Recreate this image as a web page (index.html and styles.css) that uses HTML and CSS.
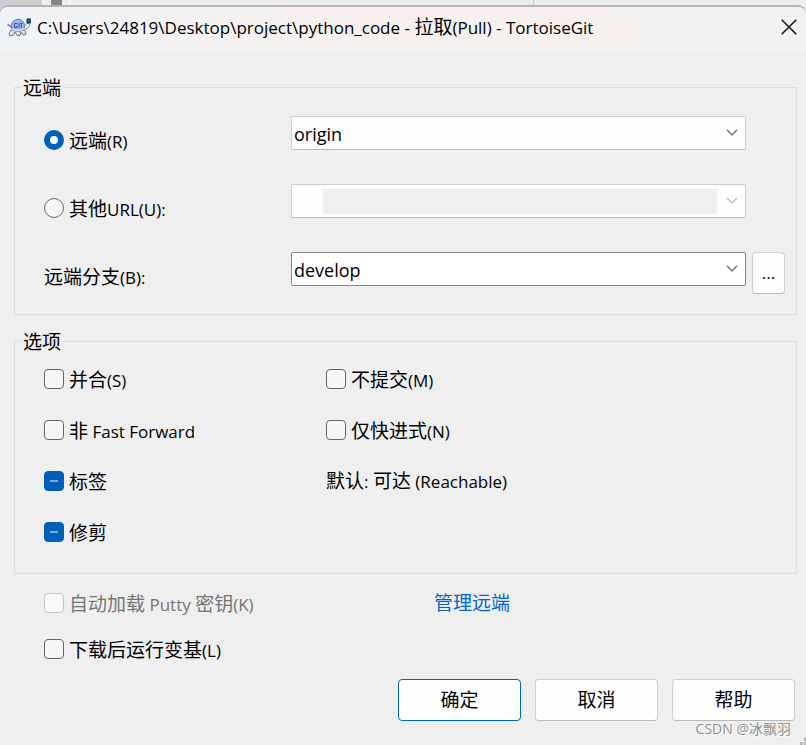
FILE: index.html
```html
<!DOCTYPE html>
<html lang="zh-CN">
<head>
<meta charset="utf-8">
<title>拉取(Pull) - TortoiseGit</title>
<link rel="stylesheet" href="styles.css">
</head>
<body>
<div class="backdrop"><span class="back-left"></span><span class="back-mark"></span><span class="back-mid"></span><span class="back-right"></span></div>
<main class="window">
  <header class="titlebar">
    <svg class="logo" viewBox="0 0 24 19" aria-hidden="true">
      <path d="M0.500 6.500 L4 8.500 L5 11" fill="none" stroke="#7d8797" stroke-width="1.800"/>
      <path d="M4 12 Q1 15 2.500 17.500 L6 17.500 L8 14 L10 17.500 L13 17.500 L14 14 L16 17 L19 16.500 Q19 13 17 12 Z" fill="#dfe2e6" stroke="#777"/>
      <path d="M16 11 Q18 5 21 5 L23 7 L20 11 Z" fill="#f0f2f4" stroke="#85898f" stroke-width=".9"/>
      <ellipse cx="11" cy="7.500" rx="6.500" ry="6.200" fill="#9db6f0" stroke="#6479b0"/>
      <path d="M5 10.500 Q11 15 17 10.500" fill="none" stroke="#dce5fa" stroke-width="1.500"/>
      <path d="M10 5.500 H7.500 V9.500 H10 V7.500 M12 5 V10 M13 5.500 H15.500 M14.300 5.500 V10" fill="none" stroke="#3d5391"/>
      <rect x="19.500" y="0.500" width="4.500" height="5" rx="1" fill="#15334c"/>
      <rect x="21" y="2" width="2" height="2" fill="#2b7c96"/>
    </svg>
    <h1 class="title"><span class="en">C:\Users\24819\Desktop\project\python_code - </span>拉取<span class="en">(Pull) - TortoiseGit</span></h1>
    <button class="close" type="button" aria-label="关闭"><svg viewBox="0 0 16 16"><path d="M.7 .7 L15.300 15.300 M15.300 .7 L.7 15.300"/></svg></button>
  </header>

  <form class="dialog">
    <fieldset class="group">
      <legend>远端</legend>
      <div class="remote-grid">
        <label class="option field-label"><input type="radio" name="source" checked><span>远端<span class="en">(R)</span></span></label>
        <div class="combo"><select aria-label="远端"><option>origin</option></select><svg class="chevron" viewBox="0 0 12 7"><path d="M1 1 L6 6 L11 1"/></svg></div>
        <label class="option field-label"><input type="radio" name="source"><span>其他<span class="en">URL(U):</span></span></label>
        <div class="combo"><select aria-label="其他URL" disabled><option></option></select><span class="mask"></span><svg class="chevron" viewBox="0 0 12 7"><path d="M1 1 L6 6 L11 1"/></svg></div>
        <label class="option field-label" for="branch"><span>远端分支<span class="en">(B):</span></span></label>
        <div class="combo strong"><select id="branch"><option>develop</option></select><svg class="chevron" viewBox="0 0 12 7"><path d="M1 1 L6 6 L11 1"/></svg></div>
        <button class="button browse" type="button">...</button>
      </div>
    </fieldset>

    <fieldset class="group">
      <legend>选项</legend>
      <div class="option-grid">
        <label class="option"><input type="checkbox"><span>并合<span class="en">(S)</span></span></label>
        <label class="option"><input type="checkbox"><span>不提交<span class="en">(M)</span></span></label>
        <label class="option"><input type="checkbox"><span>非<span class="en"> Fast Forward</span></span></label>
        <label class="option"><input type="checkbox"><span>仅快进式<span class="en">(N)</span></span></label>
        <label class="option"><input type="checkbox" data-mixed><span>标签</span></label>
        <span class="note">默认<span class="en">: </span>可达<span class="en"> (Reachable)</span></span>
        <label class="option"><input type="checkbox" data-mixed><span>修剪</span></label>
      </div>
    </fieldset>

    <div class="extras">
      <label class="option disabled"><input type="checkbox" disabled><span>自动加载<span class="en"> Putty </span>密钥<span class="en">(K)</span></span></label>
      <a class="manage" href="#remotes">管理远端</a>
      <label class="option"><input type="checkbox"><span>下载后运行变基<span class="en">(L)</span></span></label>
    </div>

    <div class="actions">
      <button class="button primary" type="submit">确定</button>
      <button class="button" type="button">取消</button>
      <button class="button" type="button">帮助</button>
    </div>
  </form>
  <span class="watermark">CSDN @冰飘羽</span>
  <svg class="grip" viewBox="0 0 6 7" aria-hidden="true"><path d="M4 0h2v3h-2z M0 4h3v3h-3z M4 4h2v3h-2z"/></svg>
</main>
<script src="script.js"></script>
</body>
</html>
```
FILE: styles.css
```css
* { box-sizing: border-box; }

body {
  margin: 0;
  min-height: 100vh;
  display: flex;
  flex-direction: column;
  background: #efefef;
  color: #000;
  font: 19px/26px "Open Sans", "Noto Sans CJK SC", sans-serif;
}

.en { font-size: 17px; line-height: 1; white-space: pre; }

button, select, input { font: inherit; color: inherit; margin: 0; }

.backdrop {
  display: flex;
  height: 16px;
  margin-bottom: -9px;
  background: #ededed;
}
.back-left { width: 43px; background: #cdcdcd; border-right: 1px solid #f8f8f8; }
.back-mark { width: 11px; margin-left: 8px; background: #868686; }
.back-mid { width: 9px; border-right: 2px solid #f8f8f8; }
.back-right { width: 463px; border-right: 1px solid #c8c8c8; margin-right: auto; }

.window {
  position: relative;
  flex: 1;
  display: flex;
  flex-direction: column;
  background: #efefef;
  border-radius: 8px 8px 0 0;
  box-shadow: 0 -2px 0 #b5b5b5;
}

.titlebar {
  display: flex;
  align-items: center;
  height: 43px;
  padding: 0 9px 3px 7px;
  gap: 6px;
  border-radius: 8px 8px 0 0;
  background: linear-gradient(90deg, #eff3f8, #f6f1ef 35%, #f6f1ef 75%, #f2f3f1 85%, #f0f3f1);
}
.logo { width: 24px; height: 19px; flex: none; }
.title { flex: 1; margin: 0; font-size: 19px; font-weight: 400; white-space: nowrap; }
.close { display: flex; padding: 0; border: 0; background: none; }
.close svg { width: 16px; height: 16px; fill: none; stroke: #111; stroke-width: 1.5; }

.dialog { padding: 24px 9px 0 14px; }

.group {
  min-width: 0;
  margin: 0;
  padding: 0 11px 0 29px;
  border: 1px solid #dcdcdc;
}
.group legend { padding: 1px 2px 0; margin-left: -23px; }

.remote-grid {
  display: grid;
  grid-template-columns: 241px 1fr 33px;
  column-gap: 6px;
  row-gap: 31px;
  align-items: start;
  padding: 15px 0 20px;
}
.field-label { grid-column: 1; padding-top: 11px; }
.combo { position: relative; grid-column: 2; }
.combo select {
  display: block;
  width: 100%;
  height: 34px;
  padding: 2px 30px 0 2px;
  appearance: none;
  font-size: 18px;
  border: 1px solid #cdcdcd;
  border-bottom-color: #b8b8b8;
  border-radius: 2px;
  background: #fdfdfd;
  opacity: 1;
}
.combo.strong select { border-color: #868686; background: #fff; }
.chevron {
  position: absolute;
  top: 13px;
  right: 8px;
  width: 12px;
  height: 7px;
  fill: none;
  stroke: #606060;
  stroke-width: 1.2;
  pointer-events: none;
}
select:disabled ~ .chevron { stroke: #b8b8b8; }
.mask { position: absolute; inset: 5px 29px 4px 32px; background: #efefef; }

.option { display: flex; align-items: center; gap: 5px; white-space: nowrap; }
.option > span { padding-top: 1px; margin-bottom: -1px; }
.option input {
  flex: none;
  display: grid;
  place-items: center;
  width: 20px;
  height: 20px;
  appearance: none;
  border: 1px solid #666;
  border-radius: 4px;
  background: #f6f6f6;
}
.option input[type="radio"] { border-radius: 50%; }
.option input[type="radio"]:checked { border: 6px solid #005fb8; background: #fff; }
.option input:indeterminate[type="checkbox"] { border-color: #005fb8; background: #005fb8; }
.option input:indeterminate[type="checkbox"]::before {
  content: "";
  width: 8px;
  height: 2px;
  background: #7faedb;
}
.option input:disabled { border-color: #c4c4c4; background: #f9f9f9; }
.disabled { color: #757575; }

.option-grid {
  display: grid;
  grid-template-columns: 282px 1fr;
  row-gap: 25px;
  padding: 11px 0 28px;
}
.group + .group { margin-top: 13px; }

.button {
  height: 42px;
  padding: 0;
  border: 1px solid #d0d0d0;
  border-bottom-color: #b8b8b8;
  border-radius: 4px;
  background: #fdfdfd;
}
.browse { font-size: 17px; }

.extras {
  display: grid;
  grid-template-columns: 390px 1fr;
  row-gap: 20px;
  padding: 16px 0 0 30px;
}
.extras .option { grid-column: 1; }
.manage { justify-self: start; color: #0066cc; text-decoration: none; }

.actions {
  display: grid;
  grid-template-columns: repeat(3, 123px);
  justify-content: end;
  gap: 14px;
  padding: 17px 2px 24px 0;
}
.button.primary { border-color: #0067b8; }

.watermark {
  position: absolute;
  right: 15px;
  bottom: 5px;
  font-size: 14px;
  line-height: 22px;
  color: #8f8f8f;
  text-shadow: 1px 1px 0 #fff;
}
.grip { position: absolute; right: 0; bottom: 0; width: 6px; height: 7px; fill: #b8b8b8; }
```
FILE: script.js
```js
document.querySelectorAll("[data-mixed]").forEach((box) => {
  box.indeterminate = true;
});
```
